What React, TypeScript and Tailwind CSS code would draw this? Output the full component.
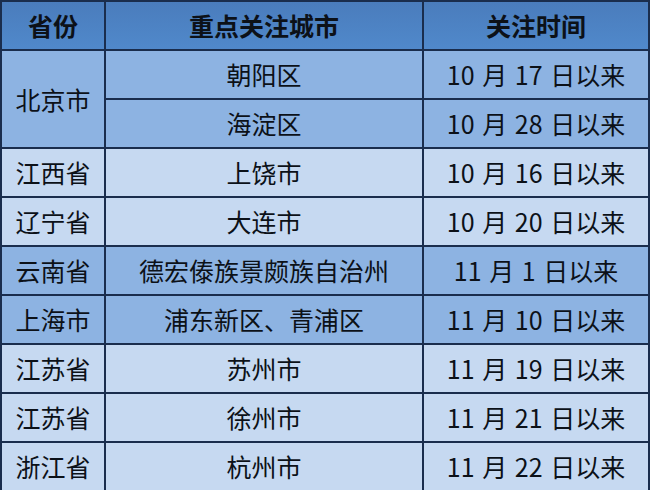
import React from 'react';

type Row = { province?: string; span?: number; city: string; date: string; dark: boolean };

const rows: Row[] = [
  { province: '北京市', span: 2, city: '朝阳区', date: '10 月 17 日以来', dark: true },
  { city: '海淀区', date: '10 月 28 日以来', dark: true },
  { province: '江西省', city: '上饶市', date: '10 月 16 日以来', dark: false },
  { province: '辽宁省', city: '大连市', date: '10 月 20 日以来', dark: false },
  { province: '云南省', city: '德宏傣族景颇族自治州', date: '11 月 1 日以来', dark: true },
  { province: '上海市', city: '浦东新区、青浦区', date: '11 月 10 日以来', dark: true },
  { province: '江苏省', city: '苏州市', date: '11 月 19 日以来', dark: false },
  { province: '江苏省', city: '徐州市', date: '11 月 21 日以来', dark: false },
  { province: '浙江省', city: '杭州市', date: '11 月 22 日以来', dark: false },
];

export default function App() {
  const cell = 'border-2 border-[#1a2d4d] text-center align-middle p-0 whitespace-nowrap';
  return (
    <div className="w-[650px] h-[490px] bg-white overflow-hidden" style={{ fontFamily: '"Noto Sans CJK SC", "Noto Sans", sans-serif' }}>
      <table className="w-[650px] border-collapse table-fixed text-[25px] leading-none text-[#0c1118]">
        <colgroup>
          <col className="w-[104px]" />
          <col className="w-[318px]" />
          <col />
        </colgroup>
        <thead>
          <tr className="h-[49px] bg-gradient-to-b from-[#4a7cbc] to-[#5089cb]">
            <th className={`${cell} font-bold`}>省份</th>
            <th className={`${cell} font-bold`}>重点关注城市</th>
            <th className={`${cell} font-bold`}>关注时间</th>
          </tr>
        </thead>
        <tbody>
          {rows.map((r, i) => {
            const bg = r.dark ? 'bg-[#8db3e2]' : 'bg-[#c6d9f1]';
            return (
              <tr key={i} className="h-[49px]">
                {r.province && (
                  <td rowSpan={r.span ?? 1} className={`${cell} ${bg}`}>
                    {r.province}
                  </td>
                )}
                <td className={`${cell} ${bg}`}>{r.city}</td>
                <td className={`${cell} ${bg} [word-spacing:2px]`}>{r.date}</td>
              </tr>
            );
          })}
        </tbody>
      </table>
    </div>
  );
}
